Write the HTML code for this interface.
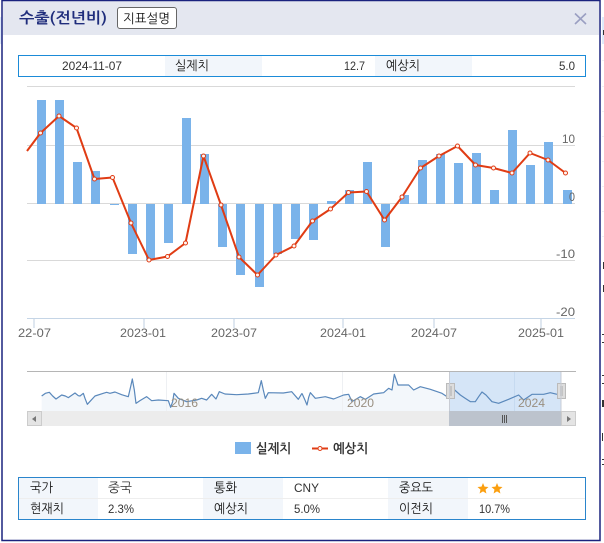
<!DOCTYPE html>
<html lang="ko">
<head>
<meta charset="utf-8">
<title>수출(전년비)</title>
<style>
html,body{margin:0;padding:0;background:#fff;width:604px;height:543px;overflow:hidden}
svg{display:block}
text{font-family:"Liberation Sans","NanumGothic","Noto Sans CJK KR",sans-serif}
.k{font-family:"NanumGothic","Noto Sans CJK KR",sans-serif;font-size:13px;fill:#111}
.d{font-size:12px;fill:#333}
.a{font-size:12px;fill:#666}
.n{font-size:12px;fill:#998f80}
</style>
</head>
<body>
<svg width="604" height="543" viewBox="0 0 604 543" xmlns="http://www.w3.org/2000/svg">
<!-- backdrop -->
<rect x="0" y="17" width="2" height="27" fill="#dfeafa"/>
<rect x="602" y="17" width="2" height="27" fill="#dfeafa"/>
<g fill="#f0f0f4">
<rect x="602" y="60" width="2" height="1"/><rect x="602" y="86" width="2" height="1"/><rect x="602" y="111" width="2" height="1"/><rect x="602" y="136" width="2" height="1"/><rect x="602" y="161" width="2" height="1"/><rect x="602" y="186" width="2" height="1"/><rect x="602" y="211" width="2" height="1"/><rect x="602" y="236" width="2" height="1"/>
</g>
<g fill="#333">
<rect x="603" y="30" width="1" height="5"/><rect x="603" y="262" width="1" height="7"/><rect x="603" y="285" width="1" height="7"/>
<rect x="602" y="334" width="2" height="1"/><rect x="602" y="342" width="2" height="1"/><rect x="602" y="375" width="2" height="1"/><rect x="602" y="383" width="2" height="1"/><rect x="602" y="400" width="2" height="7"/><rect x="602" y="433" width="1" height="8"/><rect x="602" y="459" width="2" height="1"/><rect x="602" y="464" width="2" height="1"/>
</g>
<!-- window -->
<rect x="2" y="0.5" width="598" height="540" fill="#fff"/>
<rect x="3" y="1" width="596" height="34" fill="#e4e7f0"/>
<rect x="2" y="0.5" width="598" height="540" fill="none" stroke="#1a237e" stroke-width="1.5"/>
<!-- title -->
<text x="19" y="23" textLength="88" lengthAdjust="spacingAndGlyphs" style="font-family:'NanumGothic','Noto Sans CJK KR',sans-serif;font-size:15px;font-weight:bold;fill:#1f2d7c">수출(전년비)</text>
<rect x="117.5" y="7.5" width="59" height="21" rx="2.5" fill="#fff" stroke="#666"/>
<text class="k" x="123" y="23" textLength="47" lengthAdjust="spacingAndGlyphs">지표설명</text>
<path d="M575 13.5 L586 24 M586 13.5 L575 24" stroke="#9a9fc2" stroke-width="1.6" fill="none"/>
<!-- top info -->
<rect x="165" y="56" width="97" height="20" fill="#f2f6fb"/>
<rect x="375" y="56" width="97" height="20" fill="#f2f6fb"/>
<rect x="18.5" y="55.5" width="567" height="21" fill="none" stroke="#1b8bd8"/>
<text class="d" x="62" y="70" textLength="60" lengthAdjust="spacingAndGlyphs">2024-11-07</text>
<text class="k" x="175" y="70" textLength="34" lengthAdjust="spacingAndGlyphs">실제치</text>
<text class="d" x="344" y="70" textLength="21" lengthAdjust="spacingAndGlyphs">12.7</text>
<text class="k" x="386" y="70" textLength="34" lengthAdjust="spacingAndGlyphs">예상치</text>
<text class="d" x="559" y="70" textLength="16" lengthAdjust="spacingAndGlyphs">5.0</text>
<!-- grid -->
<g stroke="#d9d9d9" stroke-width="1">
<path d="M27 86.5H575M27 145.5H575M27 203.5H575M27 260.5H575"/>
</g>
<path d="M27 318.5H575" stroke="#c5d5e6"/>
<g stroke="#dfe7f0" stroke-width="2">
<path d="M34 319V328M144 319V328M234 319V328M343 319V328M434 319V328M541 319V328"/>
</g>
<!-- bars -->
<g fill="#7ab3ea">
<rect x="37" y="100" width="9" height="104"/>
<rect x="55" y="100" width="9" height="104"/>
<rect x="73" y="162" width="9" height="42"/>
<rect x="91" y="171" width="9" height="33"/>
<rect x="110" y="204" width="9" height="1"/>
<rect x="128" y="204" width="9" height="50"/>
<rect x="146" y="204" width="9" height="56"/>
<rect x="164" y="204" width="9" height="39"/>
<rect x="182" y="118" width="9" height="86"/>
<rect x="200" y="154" width="9" height="50"/>
<rect x="218" y="204" width="9" height="43"/>
<rect x="236" y="204" width="9" height="71"/>
<rect x="255" y="204" width="9" height="83"/>
<rect x="273" y="204" width="9" height="50"/>
<rect x="291" y="204" width="9" height="35"/>
<rect x="309" y="204" width="9" height="36"/>
<rect x="327" y="201" width="9" height="3"/>
<rect x="345" y="190" width="9" height="14"/>
<rect x="363" y="162" width="9" height="42"/>
<rect x="381" y="204" width="9" height="43"/>
<rect x="400" y="195" width="9" height="9"/>
<rect x="418" y="160" width="9" height="44"/>
<rect x="436" y="154" width="9" height="50"/>
<rect x="454" y="163" width="9" height="41"/>
<rect x="472" y="153" width="9" height="51"/>
<rect x="490" y="190" width="9" height="14"/>
<rect x="508" y="130" width="9" height="74"/>
<rect x="526" y="165" width="9" height="39"/>
<rect x="544" y="142" width="9" height="62"/>
<rect x="563" y="190" width="9" height="14"/>
</g>
<!-- line -->
<polyline fill="none" stroke="#e03c14" stroke-width="2" stroke-linejoin="round" points="27,151 40.5,133 59,116 76.5,128 94.5,179 112.5,177.5 131,223 149,260 167.5,256.5 185.5,243 203.5,156 221,205 239,257 257.5,275 276,255 294,246 312.5,221 330.5,209 348.5,192.5 366.5,191.5 384.5,220 402,197 420.5,168 439,156 457.5,146 475.5,165 493.5,168 512,173 530,153 548,160 565.5,173"/>
<g fill="#fff6f2" stroke="#e03c14" stroke-width="1">
<circle cx="40.5" cy="133" r="2"/><circle cx="59" cy="116" r="2"/><circle cx="76.5" cy="128" r="2"/><circle cx="94.5" cy="179" r="2"/><circle cx="112.5" cy="177.5" r="2"/><circle cx="131" cy="223" r="2"/><circle cx="149" cy="260" r="2"/><circle cx="167.5" cy="256.5" r="2"/><circle cx="185.5" cy="243" r="2"/><circle cx="203.5" cy="156" r="2"/><circle cx="221" cy="205" r="2"/><circle cx="239" cy="257" r="2"/><circle cx="257.5" cy="275" r="2"/><circle cx="276" cy="255" r="2"/><circle cx="294" cy="246" r="2"/><circle cx="312.5" cy="221" r="2"/><circle cx="330.5" cy="209" r="2"/><circle cx="348.5" cy="192.5" r="2"/><circle cx="366.5" cy="191.5" r="2"/><circle cx="384.5" cy="220" r="2"/><circle cx="402" cy="197" r="2"/><circle cx="420.5" cy="168" r="2"/><circle cx="439" cy="156" r="2"/><circle cx="457.5" cy="146" r="2"/><circle cx="475.5" cy="165" r="2"/><circle cx="493.5" cy="168" r="2"/><circle cx="512" cy="173" r="2"/><circle cx="530" cy="153" r="2"/><circle cx="548" cy="160" r="2"/><circle cx="565.5" cy="173" r="2"/>
</g>
<!-- axis labels -->
<text class="a" x="562" y="143" textLength="13" lengthAdjust="spacingAndGlyphs">10</text>
<text class="a" x="569" y="201" textLength="6" lengthAdjust="spacingAndGlyphs">0</text>
<text class="a" x="556" y="258" textLength="19" lengthAdjust="spacingAndGlyphs">-10</text>
<text class="a" x="556" y="316" textLength="19" lengthAdjust="spacingAndGlyphs">-20</text>
<text class="a" x="18" y="337" textLength="33" lengthAdjust="spacingAndGlyphs">22-07</text>
<text class="a" x="120" y="337" textLength="46" lengthAdjust="spacingAndGlyphs">2023-01</text>
<text class="a" x="211" y="337" textLength="46" lengthAdjust="spacingAndGlyphs">2023-07</text>
<text class="a" x="320" y="337" textLength="46" lengthAdjust="spacingAndGlyphs">2024-01</text>
<text class="a" x="411" y="337" textLength="46" lengthAdjust="spacingAndGlyphs">2024-07</text>
<text class="a" x="518" y="337" textLength="46" lengthAdjust="spacingAndGlyphs">2025-01</text>
<!-- navigator -->
<g fill="#f3f7fb">
<path transform="translate(0,360) scale(.3333)" d="M125 153 L125 108 L136 100 L148 97 L158 108 L168 117 L185 105 L196 108 L205 113 L225 99 L235 107 L240 108 L250 100 L255 115 L262 133 L272 122 L285 108 L310 100 L320 97 L330 100 L345 96 L365 104 L385 110 L392 80 L397 57 L403 90 L408 130 L420 122 L440 110 L455 122 L475 120 L505 122 L512 142 L518 125 L522 100 L535 115 L560 125 L590 120 L605 115 L620 120 L635 103 L648 117 L658 95 L675 102 L710 104 L745 102 L775 98 L784 62 L790 90 L796 115 L805 98 L850 99 L875 95 L895 118 L906 100 L906 153 Z"/>
<path transform="translate(302,360) scale(.3333)" d="M0 153 L0 100 L8 118 L15 135 L20 112 L25 98 L40 115 L70 110 L95 117 L125 105 L140 103 L150 125 L175 110 L190 118 L215 102 L245 98 L260 85 L270 90 L277 43 L288 75 L320 75 L335 90 L355 80 L385 88 L420 100 L432 108 L445 98 L445 153 Z"/>
</g>
<rect x="449.5" y="372" width="111.5" height="39" fill="#d5e5f7"/>
<path d="M166.5 372V411M342.5 372V411" stroke="#eef0f3"/>
<path d="M514.5 372V411" stroke="#c6daf0"/>
<path d="M27 371.5H576" stroke="#b5b5b5"/>
<g fill="none" stroke="#5a88bb" stroke-width="3.6" stroke-linejoin="round">
<path transform="translate(0,360) scale(.3333)" d="M125 108 L136 100 L148 97 L158 108 L168 117 L185 105 L196 108 L205 113 L225 99 L235 107 L240 108 L250 100 L255 115 L262 133 L272 122 L285 108 L310 100 L320 97 L330 100 L345 96 L365 104 L385 110 L392 80 L397 57 L403 90 L408 130 L420 122 L440 110 L455 122 L475 120 L505 122 L512 142 L518 125 L522 100 L535 115 L560 125 L590 120 L605 115 L620 120 L635 103 L648 117 L658 95 L675 102 L710 104 L745 102 L775 98 L784 62 L790 90 L796 115 L805 98 L850 99 L875 95 L895 118 L906 100"/>
<path transform="translate(302,360) scale(.3333)" d="M0 100 L8 118 L15 135 L20 112 L25 98 L40 115 L70 110 L95 117 L125 105 L140 103 L150 125 L175 110 L190 118 L215 102 L245 98 L260 85 L270 90 L277 43 L288 75 L320 75 L335 90 L355 80 L385 88 L420 100 L432 108 L445 98 L458 90 L475 105 L490 115 L505 125 L520 125 L530 110 L540 96 L552 105 L570 125 L590 130 L620 118 L650 105 L665 120 L690 103 L725 103 L745 98 L765 103"/>
</g>
<text class="n" x="171" y="407" textLength="27" lengthAdjust="spacingAndGlyphs">2016</text>
<text class="n" x="347" y="407" textLength="27" lengthAdjust="spacingAndGlyphs">2020</text>
<text class="n" x="518" y="407" textLength="27" lengthAdjust="spacingAndGlyphs">2024</text>
<!-- scrollbar -->
<rect x="27" y="411" width="549" height="15" fill="#ececec"/>
<rect x="449" y="411" width="112" height="15" fill="#bcc3cd"/>
<rect x="27.5" y="411.5" width="14" height="14" fill="#e4e4e4" stroke="#ccc"/>
<rect x="561.5" y="411.5" width="14" height="14" fill="#e4e4e4" stroke="#ccc"/>
<path d="M32 419 L36 416 V422 Z" fill="#777"/>
<path d="M571 419 L567 416 V422 Z" fill="#777"/>
<path d="M503.5 415V423M505.5 415V423M507.5 415V423" stroke="#555" transform="translate(-1,0)"/>
<rect x="446.5" y="383.5" width="8" height="15" fill="#ddd" stroke="#bbb"/>
<rect x="557.5" y="383.5" width="8" height="15" fill="#ddd" stroke="#bbb"/>
<rect x="449" y="386" width="3" height="10" fill="#c4c4c4"/>
<rect x="560" y="386" width="3" height="10" fill="#c4c4c4"/>
<path d="M449.5 372V411M561 372V411" stroke="#c8ccd4"/>
<!-- legend -->
<rect x="235" y="442" width="16" height="12" fill="#7ab3ea"/>
<text class="k" x="256" y="453" textLength="35" lengthAdjust="spacingAndGlyphs" style="font-weight:bold;fill:#333">실제치</text>
<path d="M312 448.5H328" stroke="#e03c14" stroke-width="2"/>
<circle cx="320" cy="448.5" r="2" fill="#fff6f2" stroke="#e03c14"/>
<text class="k" x="333" y="453" textLength="35" lengthAdjust="spacingAndGlyphs" style="font-weight:bold;fill:#333">예상치</text>
<!-- bottom table -->
<rect x="19" y="478" width="79" height="41" fill="#f2f6fb"/>
<rect x="203" y="478" width="80" height="41" fill="#f2f6fb"/>
<rect x="388" y="478" width="80" height="41" fill="#f2f6fb"/>
<path d="M19 498.5H585" stroke="#eeeeee"/>
<rect x="18.5" y="477.5" width="567" height="42" fill="none" stroke="#2a85cc"/>
<text class="k" x="30" y="492" textLength="23" lengthAdjust="spacingAndGlyphs">국가</text>
<text class="k" x="108" y="492" textLength="24" lengthAdjust="spacingAndGlyphs" style="fill:#333">중국</text>
<text class="k" x="214" y="492" textLength="23" lengthAdjust="spacingAndGlyphs">통화</text>
<text class="d" x="294" y="492" textLength="25" lengthAdjust="spacingAndGlyphs">CNY</text>
<text class="k" x="399" y="492" textLength="34" lengthAdjust="spacingAndGlyphs">중요도</text>
<path d="M483 483 L484.5 486.6 L488.5 487 L485.5 489.6 L486.4 493.5 L483 491.4 L479.6 493.5 L480.5 489.6 L477.5 487 L481.5 486.6 Z" fill="#fb9f10"/>
<path d="M497 483 L498.5 486.6 L502.5 487 L499.5 489.6 L500.4 493.5 L497 491.4 L493.6 493.5 L494.5 489.6 L491.5 487 L495.5 486.6 Z" fill="#fb9f10"/>
<text class="k" x="30" y="513" textLength="34" lengthAdjust="spacingAndGlyphs">현재치</text>
<text class="d" x="108" y="513" textLength="26" lengthAdjust="spacingAndGlyphs">2.3%</text>
<text class="k" x="214" y="513" textLength="34" lengthAdjust="spacingAndGlyphs">예상치</text>
<text class="d" x="294" y="513" textLength="26" lengthAdjust="spacingAndGlyphs">5.0%</text>
<text class="k" x="399" y="513" textLength="34" lengthAdjust="spacingAndGlyphs">이전치</text>
<text class="d" x="479" y="513" textLength="31" lengthAdjust="spacingAndGlyphs">10.7%</text>
</svg>
</body>
</html>
